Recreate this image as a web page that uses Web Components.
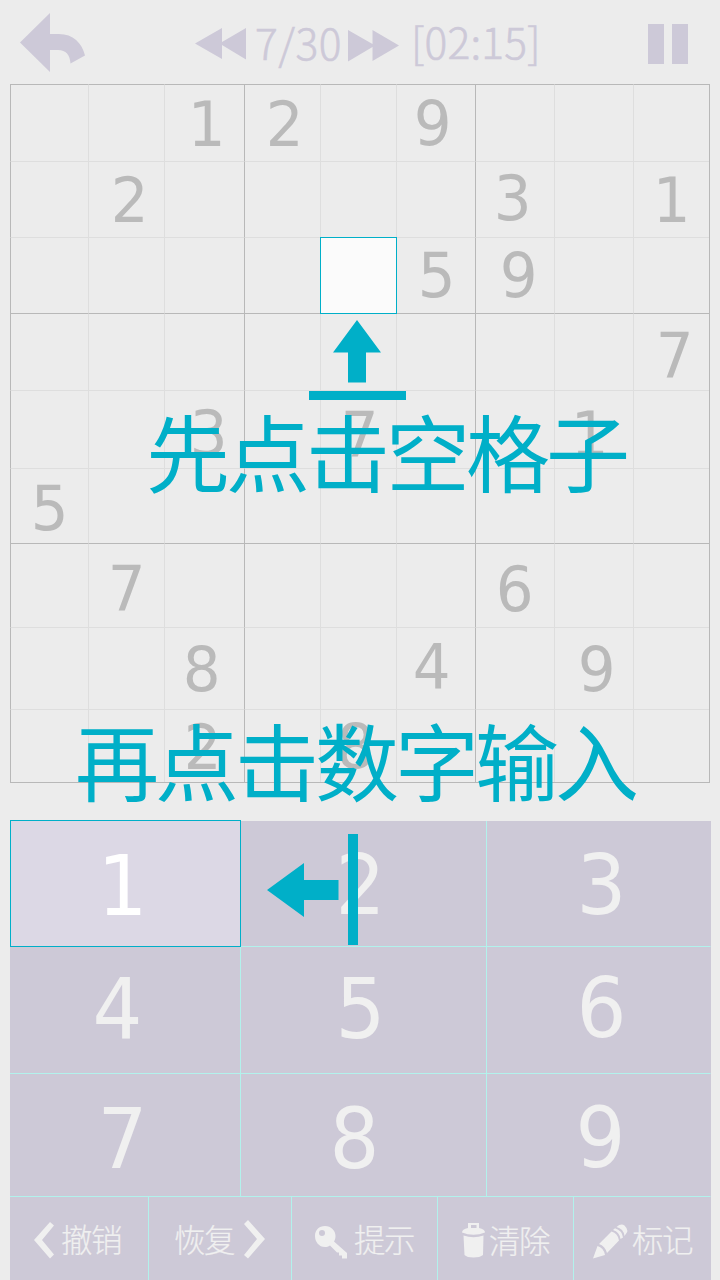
<!DOCTYPE html>
<html lang="zh-CN">
<head>
<meta charset="utf-8">
<title>数独</title>
<style>
html,body{margin:0;padding:0;background:#ececec}
body{width:720px;height:1280px;overflow:hidden;font-family:"DejaVu Sans","Noto Sans CJK SC",sans-serif}
</style>
</head>
<body>
<sudoku-app></sudoku-app>
<script>
// Horizontal centre of each digit's ink, in em from its origin
const INK=[.318,.327,.305,.316,.3145,.328,.324,.316,.318,.31];
const BASE=.846;
function place(el,digit,cx,baseline,size){
  el.style.paddingLeft=(cx-INK[digit]*size).toFixed(2)+'px';
  el.style.paddingTop=(baseline-BASE*size).toFixed(2)+'px';
}
function define(name,html,init){
  const t=document.createElement('template');t.innerHTML=html;
  customElements.define(name,class extends HTMLElement{
    connectedCallback(){
      if(this.shadowRoot)return;
      this.attachShadow({mode:'open'}).append(t.content.cloneNode(true));
      if(init)init(this,this.shadowRoot);
    }
  });
}

define('game-header',`<style>
:host{display:grid;grid-template-columns:175px 51px 102px 51px 249px 40px;padding-left:20px;height:84px;box-sizing:border-box;color:#cdc9d8;fill:#cdc9d8;font:300 42.5px/60px "Noto Sans CJK SC",sans-serif;-webkit-text-stroke:.6px #cdc9d8}
svg{display:block}
.back{margin-top:13px}.prev{margin-top:28px}.next{margin-top:30px}.pause{margin-top:24px}
span{white-space:pre;height:60px}
.level{padding-left:9px;margin-top:12px;letter-spacing:.5px}
.time{padding-left:12px;margin-top:11px;letter-spacing:.2px}
</style>
<svg class="back" width="66" height="60"><path d="M0 29.5 30 0V21H39C53 21 62 30 65 42.500L50.500 50.500C50 42 46 37 38 37H30V59Z"/></svg>
<svg class="prev" width="51" height="32"><path d="M0 15.500 27 0V14L51 0V31.500L27 17V31Z"/></svg>
<span class="level">7/30</span>
<svg class="next" width="51" height="32"><path d="M51 15.500 24.500 0V14L0 0V31.500L24.500 17V31Z"/></svg>
<span class="time">[02:15]</span>
<svg class="pause" width="40" height="40"><path d="M0 0H16V40H0ZM24 0H40V40H24Z"/></svg>`);

define('sudoku-cell',`<style>
:host{display:block;box-sizing:border-box;min-width:0;min-height:0;border:0 solid #dedede;border-top-width:1px;border-left-width:1px;font-size:62px;line-height:1;color:#bababa}
:host([left]){border-left-color:#b8b8b8}:host([top]){border-top-color:#b8b8b8}
:host([selected]){background:#fbfbfb;margin:0 -1px -1px 0;border:1px solid #00afc8;z-index:1}
slot{display:inline-block;transform:scaleX(.96)}
</style><slot></slot>`);

define('sudoku-board',`<style>
:host{display:grid;grid-template-columns:78px 76px 80px 76px 76px 79px 79px 79px 76px;grid-template-rows:77px 76px 76px 77px 78px 75px 84px 82px 73px;width:699px;margin-left:10px;border-right:1px solid #b8b8b8;border-bottom:1px solid #b8b8b8}
</style>`,(host,root)=>{
  const xs=[10,88,164,244,320,396,475,554,633],ys=[84,161,237,313,390,468,543,627,709];
  // row, column, digit, ink centre, baseline
  const clues=[[0,2,1,207,146],[0,3,2,283.5,146],[0,5,9,431.5,145.5],
    [1,1,2,128.5,222],[1,6,3,512.5,220.5],[1,8,1,672,222],
    [2,5,5,437,297],[2,6,9,517.5,297],[3,8,7,674.5,377],
    [4,2,3,208,455],[4,4,7,359,456],[4,7,1,590,456],[5,0,5,50,530],
    [6,1,7,126.5,610],[6,6,6,515,611],[7,2,8,201,691],[7,5,4,431,689],[7,7,9,595.5,691],
    [8,2,2,201.5,769],[8,4,8,355.5,768.5]];
  for(let r=0;r<9;r++)for(let c=0;c<9;c++){
    const el=document.createElement('sudoku-cell');
    if(r%3===0)el.setAttribute('top','');
    if(c%3===0)el.setAttribute('left','');
    if(r===2&&c===4)el.setAttribute('selected','');
    const q=clues.find(k=>k[0]===r&&k[1]===c);
    if(q){el.textContent=q[2];place(el,q[2],q[3]-xs[c]-.5,q[4]-ys[r]-1,62)}
    root.append(el);
  }
});

define('pad-key',`<style>
:host{display:block;box-sizing:border-box;min-width:0;min-height:0;background:#cdc9d7;border:0 solid #b2f2ec;border-right-width:1px;border-bottom-width:1px;font-size:83.500px;line-height:1;color:#f0f0f0}
:host([last]){border-right-color:#cdc9d7}
:host([active]){background:#dcd8e5;color:#fff;margin-top:-1px;border:1px solid #00afc8}
slot{display:inline-block;transform:scaleX(.94)}
</style><slot></slot>`);

define('number-pad',`<style>
:host{display:grid;grid-template-columns:231px 246px 224px;grid-template-rows:126px 127px 123px;width:701px;margin:38px 0 0 10px}
</style>`,(host,root)=>{
  const xs=[10,241,487],ys=[821,947,1074];
  const ink=[[123,916],[359.5,915],[601.5,915],[117.5,1039],[361,1039],[602.5,1038],[122,1169],[355,1169],[600,1168]];
  ink.forEach(([cx,b],i)=>{
    const el=document.createElement('pad-key');
    el.textContent=i+1;
    if(i===0)el.setAttribute('active','');
    if(i%3===2)el.setAttribute('last','');
    place(el,i+1,cx-xs[i%3]-(i?0:1),b-ys[i/3|0],83.5);
    root.append(el);
  });
});

define('tool-button',`<style>
:host{display:flex;align-items:flex-start;box-sizing:border-box;border-right:1px solid #b2f2ec;background:#cdc9d7;color:#f0f0f0;fill:#f0f0f0;font:300 31.500px/46px "Noto Sans CJK SC",sans-serif;letter-spacing:-1.500px;white-space:nowrap;-webkit-text-stroke:.2px #f0f0f0}
:host([last]){border:0}
</style><slot></slot>`);

define('tool-bar',`<style>
:host{display:grid;grid-template-columns:139px 143px 146px 136px 137px;width:701px;height:83px;margin-left:10px}
svg{display:block;flex:none}
span{display:block}
</style>
<tool-button><svg width="20" height="38" style="margin:24px 0 0 24px"><path d="M16 1 20 4.500 8 19 20 33.500 16 37.500 0 19Z"/></svg><span style="margin:18px 0 0 7px">撤销</span></tool-button>
<tool-button><span style="margin:18px 0 0 25px">恢复</span><svg width="22" height="39" style="margin:23px 0 0 10px"><path d="M4 0 0 4 13 19 0 35 4 38.500 21 19Z"/></svg></tool-button>
<tool-button><svg width="33" height="33" style="margin:29px 0 0 23px"><path fill-rule="evenodd" d="M10 0C16 0 20.500 4.500 20.500 10 20.500 12 20 14 19 15.500L32 27V32.500H27V29.500H24V26.500H22L15 19.500C13 20.500 12 21 10 21 4 21 0 16 0 10S4 0 10 0ZM7 4A3 3 0 1 0 7 10A3 3 0 1 0 7 4Z"/></svg><span style="margin:18px 0 0 6px">提示</span></tool-button>
<tool-button><svg width="24" height="35" style="margin:26px 0 0 24px"><path fill-rule="evenodd" d="M6 5V0H17V5Q23 6 23 9.500 11.500 14 0 9.500 0 6 6 5ZM9 2V5H14.500V2ZM1.500 12.500Q11.500 16 21.500 12.500L21 32Q18 34.500 11.500 34.500T2.500 32Z"/></svg><span style="margin:19px 0 0 3px">清除</span></tool-button>
<tool-button last><svg width="35" height="35" style="margin:27px 0 0 19px"><path d="M0 34.500 4.500 22Q10.500 23.500 12 31ZM6 20 18.500 7.500Q25 9.500 26 16.500L14 29Q12 22 6 20ZM20 6 22 4.300Q29 6.500 30 13.500L27.500 15Q26.500 8 20 6ZM23.500 3Q28-1 31.500 1.500 36 6 33.500 9L31.500 12Q30.500 4.500 23.500 3Z"/></svg><span style="margin:18px 0 0 4px">标记</span></tool-button>`);

// Tutorial hints float above the board and the keypad
define('tutorial-hint',`<style>
:host{position:absolute;display:block;pointer-events:none;color:#00afc8;fill:#00afc8;font:400 84px/100px "Noto Sans CJK SC",sans-serif;letter-spacing:-4px;white-space:nowrap}
</style><slot></slot>`);

define('sudoku-app',`<style>
:host{display:block;position:relative;width:720px;height:1280px;background:#ececec}
svg{display:block}
</style>
<game-header></game-header>
<sudoku-board></sudoku-board>
<number-pad></number-pad>
<tool-bar></tool-bar>
<tutorial-hint style="left:309px;top:320px"><svg width="97" height="80"><path d="M48 0 72 32.500H57V62.500H39V32.500H24ZM0 71H97V80H0Z"/></svg></tutorial-hint>
<tutorial-hint style="left:146px;top:400px">先点击空格子</tutorial-hint>
<tutorial-hint style="left:75px;top:709px">再点击数字输入</tutorial-hint>
<tutorial-hint style="left:267px;top:834px"><svg width="92" height="111"><path d="M0 56 37 29V46H71.500V66H37V83ZM81 0H91V111H81Z"/></svg></tutorial-hint>`);
</script>
</body>
</html>
